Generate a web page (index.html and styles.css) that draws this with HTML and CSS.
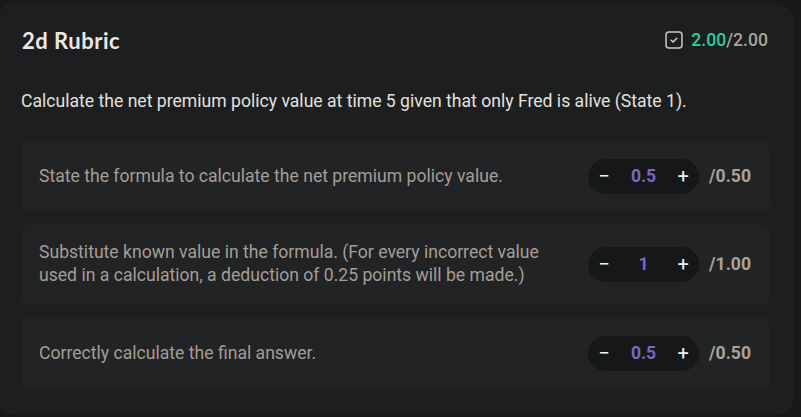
FILE: index.html
```html
<!DOCTYPE html>
<html lang="en">
<head>
<meta charset="utf-8">
<title>2d Rubric</title>
<link rel="stylesheet" href="styles.css">
</head>
<body>
<section class="card">
  <header class="card-head">
    <h2 class="title">2d Rubric</h2>
    <div class="total">
      <svg class="check" width="18" height="18" viewBox="0 0 18 18" aria-hidden="true">
        <rect x="1" y="1" width="16" height="16" rx="3" fill="none" stroke="#c9c9c9" stroke-width="1.5"/>
        <path d="M6.2 9.3 L8.1 11 L11.8 7.3" fill="none" stroke="#d8d8d8" stroke-width="1.4" stroke-linecap="round" stroke-linejoin="round"/>
      </svg>
      <span class="got">2.00</span><span class="max">/2.00</span>
    </div>
  </header>
  <p class="question">Calculate the net premium policy value at time 5 given that only Fred is alive (State 1).</p>
  <div class="rows">
    <div class="row">
      <div class="row-text">State the formula to calculate the net premium policy value.</div>
      <div class="score">
        <div class="stepper"><span class="btn">−</span><span class="val">0.5</span><span class="btn">+</span></div>
        <span class="out">/0.50</span>
      </div>
    </div>
    <div class="row">
      <div class="row-text">Substitute known value in the formula. (For every incorrect value used in a calculation, a deduction of 0.25 points will be made.)</div>
      <div class="score">
        <div class="stepper"><span class="btn">−</span><span class="val">1</span><span class="btn">+</span></div>
        <span class="out">/1.00</span>
      </div>
    </div>
    <div class="row">
      <div class="row-text">Correctly calculate the final answer.</div>
      <div class="score">
        <div class="stepper"><span class="btn">−</span><span class="val">0.5</span><span class="btn">+</span></div>
        <span class="out">/0.50</span>
      </div>
    </div>
  </div>
</section>
</body>
</html>
```
FILE: styles.css
```css
* { box-sizing: border-box; }
html, body { margin: 0; padding: 0; background: #17181a; }
body {
  font-family: Roboto, "Liberation Sans", sans-serif;
  width: 801px;
  height: 417px;
  overflow: hidden;
}
.card {
  margin: 3px 0 0 -3px;
  width: 797px;
  height: 412px;
  background: #1d1e20;
  border-radius: 18px;
  padding: 24px 24px 0 24px;
}
.card-head {
  display: flex;
  align-items: center;
  justify-content: space-between;
  height: 26px;
}
.title {
  margin: 0 0 0 1px;
  font-family: Lato, "Noto Sans", sans-serif;
  font-weight: 700;
  font-size: 22px;
  letter-spacing: 0.5px;
  color: #ebe8e4;
}
.total {
  display: flex;
  align-items: center;
  font-size: 17.6px;
  font-weight: 500;
  margin-right: 2px;
}
.check { margin-right: 8px; }
.got { color: #2fcf9b; }
.max { color: #aaa49c; }
.question {
  margin: 36px 0 0 0;
  font-size: 17.6px;
  line-height: 24px;
  color: #e3e1de;
}
.rows {
  margin-top: 28px;
  display: flex;
  flex-direction: column;
  gap: 12.5px;
}
.row {
  background: #222325;
  border-radius: 10px;
  padding: 17.5px 19px 17.5px 18px;
  display: flex;
  align-items: center;
  gap: 44px;
}
.row:last-child { padding: 18.5px 19px 18.5px 18px; }
.row-text {
  flex: 1;
  font-size: 17.6px;
  line-height: 23px;
  color: #a49e96;
}
.score {
  display: flex;
  align-items: center;
  gap: 10px;
}
.stepper {
  width: 111px;
  height: 35px;
  border-radius: 18px;
  background: #161718;
  display: flex;
  align-items: center;
  justify-content: space-between;
  padding: 0 10px;
}
.btn {
  width: 12px;
  text-align: center;
  color: #f2f2f2;
  font-size: 20px;
  font-weight: 400;
}
.val {
  color: #7a66c6;
  font-size: 17.6px;
  font-weight: 700;
}
.out {
  color: #a8a29a;
  font-size: 17.6px;
  font-weight: 700;
}
```
